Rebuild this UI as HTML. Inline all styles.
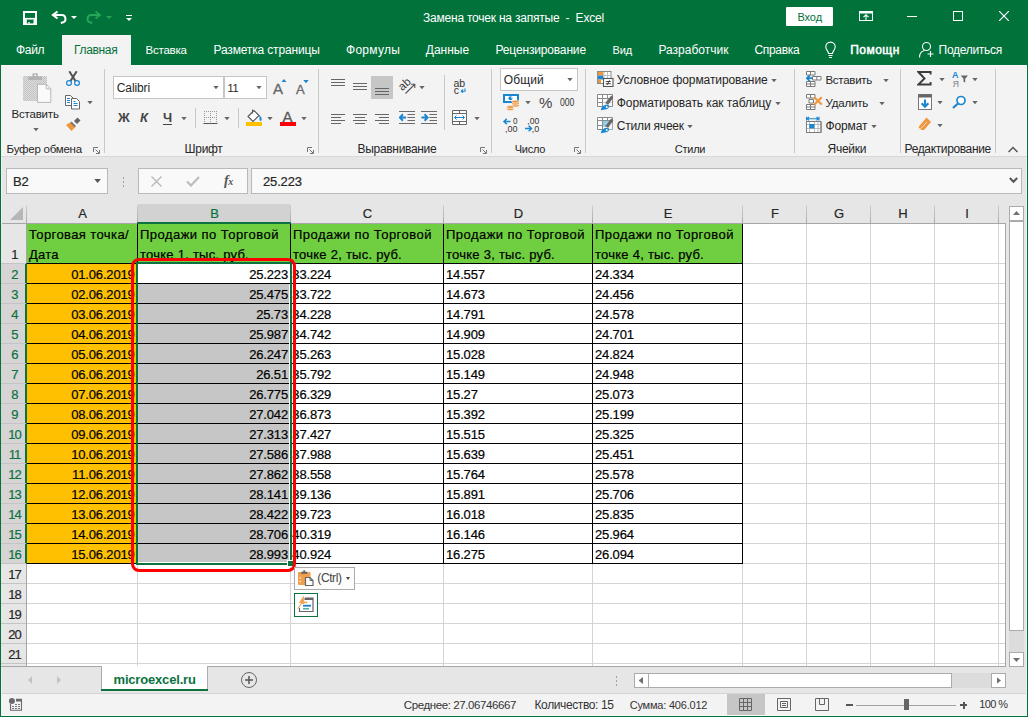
<!DOCTYPE html>
<html lang="ru"><head><meta charset="utf-8"><title>Замена точек на запятые - Excel</title>
<style>
*{box-sizing:border-box;margin:0;padding:0}
html,body{width:1028px;height:717px;overflow:hidden}
body{position:relative;background:#e6e6e6;font-family:"Liberation Sans",sans-serif;font-size:12px;color:#262626}
.abs,.t,.box,svg.i{position:absolute}
.t{white-space:nowrap;line-height:16px;height:16px}
.w{color:#fff}
.ui{font-size:12px;color:#262626}
.cell{position:absolute;white-space:nowrap;font-size:13px;line-height:20px;height:20px;color:#000;letter-spacing:-0.15px}
.tx{letter-spacing:0.38px}
.cell,.hd,.rn{-webkit-text-stroke:0.2px currentColor}
.hd{position:absolute;font-size:13px;line-height:19px;height:19px;color:#262626;text-align:center}
.rn{position:absolute;left:2px;width:25px;letter-spacing:-0.9px;font-size:13px;line-height:20px;height:20px;color:#262626;text-align:center}
.vsep{position:absolute;width:1px;background:#d4d4d4}
.arr{position:absolute;width:5.4px;height:3.2px;margin-left:0.3px;background:#555;clip-path:polygon(0 0,100% 0,50% 100%)}
</style></head><body>
<div class="box" style="left:0;top:0;width:1028px;height:65px;background:#02723b"></div>
<div class="box" style="left:0;top:65px;width:1px;height:652px;background:#02723b"></div>
<div class="box" style="left:1027px;top:65px;width:1px;height:652px;background:#02723b"></div>
<div class="box" style="left:0;top:716px;width:1028px;height:1px;background:#02723b"></div>
<div id="f1" class="t" style="left:423px;top:10px;font-size:12px;color:#fff;letter-spacing:-0.217px;white-space:pre;">Замена точек на запятые  -  Excel</div>
<svg class="i" style="left:23px;top:11px" width="14" height="14" viewBox="0 0 14 14"><rect x="1" y="1" width="12" height="12" fill="none" stroke="#fff" stroke-width="2"/><rect x="1" y="6.900" width="12" height="1.800" fill="#fff"/><rect x="0" y="8.500" width="14" height="5.500" fill="#fff"/><rect x="3.800" y="8.700" width="6.700" height="3.700" fill="#02723b"/><rect x="5.300" y="11" width="1.500" height="1.500" fill="#fff"/></svg>
<svg class="i" style="left:51px;top:10px" width="16" height="16" viewBox="0 0 16 16"><path d="M6.500 1.500L2 5L6.500 8.500" fill="none" stroke="#fff" stroke-width="2.200"/><path d="M2 5H10.500a3.800 3.800 0 0 1 1 7.500L9.800 13" fill="none" stroke="#fff" stroke-width="2"/></svg>
<div class="box" style="left:70.500px;top:16px;width:0;height:0;border-left:3px solid transparent;border-right:3px solid transparent;border-top:3px solid #fff"></div>
<svg class="i" style="left:86px;top:10px" width="16" height="16" viewBox="0 0 16 16"><path d="M9.500 1.500L14 5L9.500 8.500" fill="none" stroke="#22a352" stroke-width="1.900"/><path d="M14 5H5.500a3.800 3.800 0 0 0-1 7.500L6.200 13" fill="none" stroke="#25a858" stroke-width="1.900"/></svg>
<div class="box" style="left:105.500px;top:16px;width:0;height:0;border-left:3px solid transparent;border-right:3px solid transparent;border-top:3px solid #22a352"></div>
<div class="box" style="left:126px;top:15px;width:5.500px;height:1px;background:#fff"></div>
<div class="box" style="left:125.500px;top:18px;width:0;height:0;border-left:3px solid transparent;border-right:3px solid transparent;border-top:3.300px solid #fff"></div>
<div class="box" style="left:786px;top:7px;width:47px;height:19px;background:#fff;border-radius:1px"></div>
<div id="f2" class="t" style="left:797.5px;top:9px;font-size:11px;color:#02723b;letter-spacing:-0.112px;">Вход</div>
<svg class="i" style="left:859px;top:11px" width="14" height="10" viewBox="0 0 14 10"><rect x="0.5" y="0.5" width="13" height="9" fill="none" stroke="#fff"/><rect x="0" y="0" width="14" height="2.5" fill="#fff"/><path d="M7 4v5M4.5 6.2L7 3.8L9.5 6.2" fill="none" stroke="#fff" stroke-width="1.1"/></svg>
<div class="box" style="left:907px;top:16px;width:10px;height:1px;background:#fff"></div>
<div class="box" style="left:953px;top:11px;width:10px;height:10px;border:1px solid #fff"></div>
<svg class="i" style="left:999px;top:11px" width="10" height="10" viewBox="0 0 10 10"><path d="M0 0L10 10M10 0L0 10" stroke="#fff" stroke-width="1.2"/></svg>
<div class="box" style="left:62px;top:35px;width:69px;height:30px;background:#f3f3f3"></div>
<div id="f3" class="t" style="left:16px;top:42px;font-size:12px;color:#fff;letter-spacing:-0.319px;">Файл</div>
<div id="f4" class="t" style="left:74px;top:42px;font-size:12px;color:#02723b;letter-spacing:-0.337px;">Главная</div>
<div id="f5" class="t" style="left:145.5px;top:42px;font-size:11.5px;color:#fff;letter-spacing:-0.208px;">Вставка</div>
<div id="f6" class="t" style="left:213.5px;top:42px;font-size:12px;color:#fff;letter-spacing:-0.162px;">Разметка страницы</div>
<div id="f7" class="t" style="left:346px;top:42px;font-size:12px;color:#fff;letter-spacing:0.274px;">Формулы</div>
<div id="f8" class="t" style="left:425.8px;top:42px;font-size:12px;color:#fff;letter-spacing:-0.011px;">Данные</div>
<div id="f9" class="t" style="left:495.5px;top:42px;font-size:12px;color:#fff;letter-spacing:-0.161px;">Рецензирование</div>
<div id="f10" class="t" style="left:612.6px;top:42px;font-size:11px;color:#fff;letter-spacing:-0.203px;">Вид</div>
<div id="f11" class="t" style="left:658.4px;top:42px;font-size:12px;color:#fff;letter-spacing:0.001px;">Разработчик</div>
<div id="f12" class="t" style="left:754.4px;top:42px;font-size:12px;color:#fff;letter-spacing:-0.304px;">Справка</div>
<div id="f13" class="t" style="left:938.6px;top:42px;font-size:12px;color:#fff;letter-spacing:-0.302px;">Поделиться</div>
<div id="f14" class="t" style="left:850.2px;top:42px;font-size:12px;color:#fff;letter-spacing:0.485px;-webkit-text-stroke:0.5px #fff;">Помощн</div>
<svg class="i" style="left:824px;top:41px" width="13" height="18" viewBox="0 0 13 18"><path d="M4.5 12.5C4.5 10 1.8 9 1.8 5.8a4.7 4.7 0 0 1 9.4 0C11.2 9 8.5 10 8.5 12.5z" fill="none" stroke="#fff" stroke-width="1.1"/><path d="M4.5 14.5h4M5 16.5h3" stroke="#fff" stroke-width="1"/></svg>
<svg class="i" style="left:918px;top:41px" width="17" height="18" viewBox="0 0 17 18"><circle cx="8.5" cy="5.5" r="4" fill="none" stroke="#fff" stroke-width="1.1"/><path d="M1.5 16.5c0-4 2.5-6.5 5-7" fill="none" stroke="#fff" stroke-width="1.1"/><path d="M12.5 10v6M9.5 13h6" stroke="#fff" stroke-width="1.1"/></svg>
<div class="box" style="left:1px;top:65px;width:1026px;height:91px;background:#f3f3f3"></div>
<div class="box" style="left:1px;top:156px;width:1026px;height:1px;background:#d8d8d8"></div>
<div class="box" style="left:1px;top:65px;width:61px;height:1px;background:#fbf8fa"></div>
<div class="box" style="left:131px;top:65px;width:896px;height:1px;background:#fbf8fa"></div>
<div class="box" style="left:1026px;top:65px;width:1px;height:91px;background:#fbf8fa"></div>
<div class="box" style="left:104px;top:69px;width:1px;height:84px;background:#c8c8c8"></div>
<div class="box" style="left:318px;top:69px;width:1px;height:84px;background:#c8c8c8"></div>
<div class="box" style="left:491px;top:69px;width:1px;height:84px;background:#c8c8c8"></div>
<div class="box" style="left:585px;top:69px;width:1px;height:84px;background:#c8c8c8"></div>
<div class="box" style="left:794px;top:69px;width:1px;height:84px;background:#c8c8c8"></div>
<div class="box" style="left:900px;top:69px;width:1px;height:84px;background:#c8c8c8"></div>
<div class="box" style="left:995px;top:69px;width:1px;height:84px;background:#c8c8c8"></div>
<div class="box" style="left:195px;top:108px;width:1px;height:20px;background:#c8c8c8"></div>
<div class="box" style="left:238px;top:108px;width:1px;height:20px;background:#c8c8c8"></div>
<div class="box" style="left:444px;top:75px;width:1px;height:55px;background:#c8c8c8"></div>
<div class="box" style="left:23px;top:76px;width:24px;height:25px;border-radius:1px;background:repeating-conic-gradient(#c4c4c4 0% 25%,#dcdcdc 0% 50%) 0 0/2px 2px"></div>
<svg class="i" style="left:22px;top:72px" width="30" height="32" viewBox="0 0 30 32"><rect x="6.300" y="4.500" width="13.700" height="3.500" fill="#b2b2b2"/><rect x="10.500" y="1.200" width="5.300" height="4" rx="1" fill="#b2b2b2"/><circle cx="13.200" cy="3.200" r="1" fill="#f3f3f3"/><path d="M15.500 12.300h8.700l4.600 4.600v13.500h-13.300z" fill="#fafafa" stroke="#b8b8b8"/><path d="M24.200 12.300v4.600h4.600" fill="none" stroke="#b8b8b8"/></svg>
<div id="f15" class="t" style="left:11.6px;top:106px;font-size:11.5px;color:#262626;letter-spacing:-0.207px;">Вставить</div>
<div class="arr" style="left:33px;top:128px;background:#666"></div>
<svg class="i" style="left:65px;top:71px" width="16" height="16" viewBox="0 0 16 16"><path d="M4.300 0.300L10.800 10.500M11.700 0.300L5.200 10.500" stroke="#505050" stroke-width="2" fill="none"/><circle cx="4" cy="12" r="2.400" fill="#f3f3f3" stroke="#1a86d0" stroke-width="1.200"/><circle cx="12" cy="12" r="2.400" fill="#f3f3f3" stroke="#1a86d0" stroke-width="1.200"/></svg>
<svg class="i" style="left:64px;top:95px" width="17" height="15" viewBox="0 0 17 15"><path d="M1.500 0.500h5l2.500 2.500v7.500h-7.500z" fill="#fff" stroke="#666"/><path d="M7.500 3.500h5l3 3v7.500h-8z" fill="#fff" stroke="#666"/><path d="M3 3.500h3M3 5.500h3M3 7.500h3M9.500 8.500h4M9.500 10.500h4" stroke="#1a86d0"/><path d="M9.500 6.500h2" stroke="#1a86d0"/></svg>
<div class="arr" style="left:87px;top:101px;background:#666"></div>
<svg class="i" style="left:65px;top:116px" width="17" height="16" viewBox="0 0 17 16"><path d="M9 5L12.500 1.500L15.500 4.500L12 8z" fill="#666"/><path d="M6.500 5.500L11 10L9 12L4.500 7.500z" fill="#777"/><path d="M1 9L5 6.500L10 11.500L6.500 15z" fill="#f0963c"/></svg>
<div id="f16" class="t" style="left:6.6px;top:141px;font-size:11.5px;color:#262626;letter-spacing:-0.24px;">Буфер обмена</div>
<svg class="i" style="left:93px;top:147px" width="7" height="7" viewBox="0 0 7 7"><path d="M0.5 5V0.5H5" fill="none" stroke="#777" stroke-width="1"/><path d="M2.5 2.5L6 6M6.5 3v3.5H3" fill="none" stroke="#777" stroke-width="1"/></svg>
<div class="box" style="left:113px;top:76px;width:111px;height:23px;background:#fff;border:1px solid #c6c6c6"></div>
<div class="box" style="left:224px;top:76px;width:43px;height:23px;background:#fff;border:1px solid #c6c6c6"></div>
<div id="f17" class="t" style="left:116.8px;top:80px;font-size:12px;color:#262626;letter-spacing:-0.125px;">Calibri</div>
<div id="f18" class="t" style="left:227.4px;top:80px;font-size:11px;color:#262626;letter-spacing:-0.215px;">11</div>
<div class="arr" style="left:213px;top:86px;background:#666"></div>
<div class="arr" style="left:256px;top:86px;background:#666"></div>
<div class="t" style="left:273px;top:81px;font-size:15px;color:#666;-webkit-text-stroke:0.300px #666">A</div>
<div class="arr" style="left:281px;top:79px;background:#1a86d0;clip-path:polygon(0 100%,100% 100%,50% 0)"></div>
<div class="t" style="left:296px;top:82px;font-size:13px;color:#666;-webkit-text-stroke:0.300px #666">A</div>
<div class="arr" style="left:303px;top:80px;background:#1a86d0"></div>
<div class="t" style="left:118px;top:110px;font-size:13px;font-weight:bold;color:#444">Ж</div>
<div class="t" style="left:140px;top:110px;font-size:13px;font-weight:bold;font-style:italic;color:#444">К</div>
<div class="t" style="left:163px;top:110px;font-size:13px;font-weight:bold;color:#444;border-bottom:1px solid #444;height:15px;line-height:15px">Ч</div>
<div class="arr" style="left:181px;top:117px;background:#666"></div>
<svg class="i" style="left:203px;top:110px" width="15" height="15" viewBox="0 0 15 15"><path d="M1 1.500h13M1 7.500h13M1.500 1v12M7.500 1v12M13.500 1v12" stroke="#999" stroke-dasharray="1 1" fill="none"/><path d="M0.500 13.500h14" stroke="#555"/></svg>
<div class="arr" style="left:224px;top:117px;background:#666"></div>
<svg class="i" style="left:245px;top:109px" width="18" height="17" viewBox="0 0 18 17"><path d="M3 7.500L9 1.500L14 6.500L8 12.500z" fill="#fff" stroke="#555" stroke-width="1.100"/><path d="M7.500 0.500v4" stroke="#555"/><path d="M13.500 5.500c2.500 1.500 3.800 3.800 3 6c-1 1-2.300 0-2-1.500c0.300-1.500 0-3-1-4.500z" fill="#1a86d0"/><rect x="1" y="13" width="16" height="4" fill="#ffc000"/></svg>
<div class="arr" style="left:267px;top:117px;background:#666"></div>
<div class="t" style="left:282.500px;top:108.500px;font-size:15px;color:#5a5a5a;-webkit-text-stroke:0.300px #5a5a5a">A</div>
<div class="box" style="left:280px;top:122px;width:16px;height:4px;background:#fb0007"></div>
<div class="arr" style="left:301px;top:117px;background:#666"></div>
<div id="f19" class="t" style="left:184.6px;top:141px;font-size:12px;color:#262626;letter-spacing:-0.308px;">Шрифт</div>
<svg class="i" style="left:307px;top:147px" width="7" height="7" viewBox="0 0 7 7"><path d="M0.5 5V0.5H5" fill="none" stroke="#777" stroke-width="1"/><path d="M2.5 2.5L6 6M6.5 3v3.5H3" fill="none" stroke="#777" stroke-width="1"/></svg>
<div class="box" style="left:331px;top:79px;width:14px;height:1px;background:#666"></div>
<div class="box" style="left:331px;top:82px;width:14px;height:1px;background:#666"></div>
<div class="box" style="left:331px;top:85px;width:14px;height:1px;background:#666"></div>
<div class="box" style="left:353px;top:83px;width:14px;height:1px;background:#666"></div>
<div class="box" style="left:353px;top:86px;width:14px;height:1px;background:#666"></div>
<div class="box" style="left:353px;top:89px;width:14px;height:1px;background:#666"></div>
<div class="box" style="left:371px;top:76px;width:22px;height:23px;background:#c6c6c6"></div>
<div class="box" style="left:375px;top:88px;width:14px;height:1px;background:#666"></div>
<div class="box" style="left:375px;top:91px;width:14px;height:1px;background:#666"></div>
<div class="box" style="left:375px;top:94px;width:14px;height:1px;background:#666"></div>
<svg class="i" style="left:398px;top:78px" width="19" height="18" viewBox="0 0 19 18"><text x="0" y="0" transform="translate(4.300,13.300) rotate(-42)" font-family="Liberation Sans, sans-serif" font-size="11.500" fill="#3a3a3a">ab</text><path d="M7.500 15.500L16.500 6.500M13 6.200h3.800v3.800" fill="none" stroke="#555" stroke-width="1.100"/></svg>
<div class="arr" style="left:419px;top:86px;background:#666"></div>
<svg class="i" style="left:453px;top:78px" width="15" height="17" viewBox="0 0 15 17"><text x="0.500" y="8.500" font-family="Liberation Sans, sans-serif" font-size="10.500" fill="#333">ab</text><text x="0.800" y="15.500" font-family="Liberation Sans, sans-serif" font-size="10.500" fill="#333">c</text><path d="M12 10.500v2.700h-3.500M10 11.500l-1.700 1.700l1.700 1.700" fill="none" stroke="#1a86d0" stroke-width="1.100"/></svg>
<svg class="i" style="left:452px;top:110px" width="15" height="15" viewBox="0 0 15 15"><path d="M0.500 0.500h14v14h-14zM0.500 3.500h14M0.500 11.500h14M7.500 0.500v3M7.500 11.500v3" fill="#fff" stroke="#666"/><path d="M2.500 7.500h10M4.500 5.500l-2 2l2 2M10.500 5.500l2 2l-2 2" fill="none" stroke="#1a86d0" stroke-width="1"/></svg>
<div class="arr" style="left:474px;top:117px;background:#666"></div>
<div class="box" style="left:331px;top:114px;width:14px;height:1px;background:#666"></div>
<div class="box" style="left:331px;top:117px;width:10px;height:1px;background:#666"></div>
<div class="box" style="left:331px;top:120px;width:14px;height:1px;background:#666"></div>
<div class="box" style="left:331px;top:123px;width:10px;height:1px;background:#666"></div>
<div class="box" style="left:353px;top:114px;width:14px;height:1px;background:#666"></div>
<div class="box" style="left:355px;top:117px;width:10px;height:1px;background:#666"></div>
<div class="box" style="left:353px;top:120px;width:14px;height:1px;background:#666"></div>
<div class="box" style="left:355px;top:123px;width:10px;height:1px;background:#666"></div>
<div class="box" style="left:375px;top:114px;width:14px;height:1px;background:#666"></div>
<div class="box" style="left:379px;top:117px;width:10px;height:1px;background:#666"></div>
<div class="box" style="left:375px;top:120px;width:14px;height:1px;background:#666"></div>
<div class="box" style="left:379px;top:123px;width:10px;height:1px;background:#666"></div>
<svg class="i" style="left:399px;top:110px" width="16" height="15" viewBox="0 0 17 15" preserveAspectRatio="none"><path d="M0 1.500h17M9 4.500h8M9 7.500h8M9 10.500h8M0 13.500h17" stroke="#666"/><path d="M7.500 7.500h-6M4.200 4.300l-3.200 3.200l3.200 3.200" fill="none" stroke="#1a86d0" stroke-width="2"/></svg>
<svg class="i" style="left:421px;top:110px" width="16" height="15" viewBox="0 0 17 15" preserveAspectRatio="none"><path d="M0 1.500h17M9 4.500h8M9 7.500h8M9 10.500h8M0 13.500h17" stroke="#666"/><path d="M0.500 7.500h6M3.800 4.300l3.200 3.200l-3.200 3.200" fill="none" stroke="#1a86d0" stroke-width="2"/></svg>
<div id="f20" class="t" style="left:357.6px;top:141px;font-size:12px;color:#262626;letter-spacing:-0.323px;">Выравнивание</div>
<svg class="i" style="left:480px;top:147px" width="7" height="7" viewBox="0 0 7 7"><path d="M0.5 5V0.5H5" fill="none" stroke="#777" stroke-width="1"/><path d="M2.5 2.5L6 6M6.5 3v3.5H3" fill="none" stroke="#777" stroke-width="1"/></svg>
<div class="box" style="left:500px;top:68px;width:78px;height:23px;background:#fff;border:1px solid #c6c6c6"></div>
<div id="f21" class="t" style="left:503.7px;top:72px;font-size:12px;color:#262626;letter-spacing:0.133px;">Общий</div>
<div class="arr" style="left:567px;top:78px;background:#666"></div>
<svg class="i" style="left:502px;top:93px" width="18" height="18" viewBox="0 0 18 18"><rect x="2" y="2" width="14" height="7" fill="#fff" stroke="#1a86d0" stroke-width="2"/><circle cx="8.500" cy="5.300" r="2" fill="#1a86d0"/><path d="M8.800 4.200a1.400 1.400 0 0 1 1.300 1.600" stroke="#fff" stroke-width="0.800" fill="none"/><g fill="#f0963c" stroke="#f3f3f3" stroke-width="0.700"><ellipse cx="13.500" cy="12.600" rx="3.600" ry="1.500"/><ellipse cx="13.500" cy="10.600" rx="3.600" ry="1.500"/><ellipse cx="13.500" cy="8.600" rx="3.600" ry="1.500"/><ellipse cx="8.300" cy="16" rx="3.600" ry="1.500"/><ellipse cx="8.300" cy="14" rx="3.600" ry="1.500"/></g></svg>
<div class="arr" style="left:525px;top:101px;background:#666"></div>
<div class="t" style="left:539px;top:95px;font-size:15px;color:#444">%</div>
<div class="t" style="left:560px;top:93.500px;font-size:11px;color:#333;transform:scaleX(0.780);transform-origin:left center">000</div>
<svg class="i" style="left:502px;top:116px" width="17" height="18" viewBox="0 0 17 18"><text x="11" y="8" font-family="Liberation Sans, sans-serif" font-size="9" fill="#333" textLength="4.500" lengthAdjust="spacingAndGlyphs">0</text><text x="3" y="16" font-family="Liberation Sans, sans-serif" font-size="9" fill="#333" textLength="12.500" lengthAdjust="spacingAndGlyphs">,00</text><path d="M8.500 5.500H2M4.800 2.700L2 5.500l2.800 2.800" fill="none" stroke="#1a86d0" stroke-width="1.500"/></svg>
<svg class="i" style="left:524px;top:116px" width="17" height="18" viewBox="0 0 17 18"><text x="3.300" y="8" font-family="Liberation Sans, sans-serif" font-size="9" fill="#333" textLength="12" lengthAdjust="spacingAndGlyphs">,00</text><text x="7.800" y="16" font-family="Liberation Sans, sans-serif" font-size="9" fill="#333" textLength="7.500" lengthAdjust="spacingAndGlyphs">,0</text><path d="M1 12.500h6.500M4.700 9.700l2.800 2.800l-2.800 2.800" fill="none" stroke="#1a86d0" stroke-width="1.500"/></svg>
<div id="f22" class="t" style="left:514.7px;top:141px;font-size:11px;color:#262626;letter-spacing:-0.253px;">Число</div>
<svg class="i" style="left:574px;top:147px" width="7" height="7" viewBox="0 0 7 7"><path d="M0.5 5V0.5H5" fill="none" stroke="#777" stroke-width="1"/><path d="M2.5 2.5L6 6M6.5 3v3.5H3" fill="none" stroke="#777" stroke-width="1"/></svg>
<svg class="i" style="left:597px;top:71px" width="17" height="16" viewBox="0 0 17 16"><rect x="0.500" y="0.500" width="13.500" height="12" fill="#fff" stroke="#8a8a8a"/><rect x="1" y="1" width="5.500" height="3.500" fill="#f0963c"/><rect x="1" y="4.500" width="5.500" height="4" fill="#1a86d0"/><rect x="1" y="8.500" width="3" height="3.500" fill="#f0963c"/><path d="M7 1v6M10.500 1v6M7 4.500h7" stroke="#c0c0c0" fill="none"/><rect x="6.500" y="7.500" width="9.500" height="8" fill="#fff" stroke="#555" stroke-width="1.100"/><path d="M8.800 10.500h5M8.800 12.700h5M12.600 9.300l-2.600 4.600" stroke="#333" stroke-width="0.900" fill="none"/></svg>
<svg class="i" style="left:597px;top:94px" width="17" height="17" viewBox="0 0 17 17"><path d="M0.500 0.500h15v12h-15zM0.500 4.500h15M0.500 8.500h15M5.500 0.500v12M10.500 0.500v12" fill="#fff" stroke="#8a8a8a"/><rect x="6" y="5" width="9" height="7" fill="#f3f3f3" opacity="0.700"/><path d="M16.300 3.500L11.200 10.800l-3-1.800L14.300 1.500z" fill="#666"/><path d="M3.800 16.300c0.600-4.100 4.300-6.600 7.600-5.200c1.600 1.600 0.300 3.700-2.200 4.100c-1.800 0.300-3.600 0.500-5.400 1.100z" fill="#1a86d0"/><circle cx="9.700" cy="12.900" r="1" fill="#fff"/></svg>
<svg class="i" style="left:597px;top:117px" width="17" height="17" viewBox="0 0 17 17"><path d="M0.500 0.500h15v12h-15zM0.500 3.500h15M0.500 8.500h5M5.500 0.500v12M10.500 0.500v3" fill="#fff" stroke="#8a8a8a"/><rect x="6" y="4" width="6" height="6" fill="#8fd0ee"/><rect x="9" y="6" width="6.500" height="6.500" fill="#f3f3f3" opacity="0.600"/><path d="M16.300 3.500L11.200 10.800l-3-1.800L14.300 1.500z" fill="#666"/><path d="M3.800 16.300c0.600-4.100 4.300-6.600 7.600-5.200c1.600 1.600 0.300 3.700-2.200 4.100c-1.800 0.300-3.600 0.500-5.400 1.100z" fill="#1a86d0"/><circle cx="9.700" cy="12.900" r="1" fill="#fff"/></svg>
<div id="f23" class="t" style="left:616.8px;top:72px;font-size:12px;color:#262626;letter-spacing:-0.079px;">Условное форматирование</div>
<div class="arr" style="left:771px;top:79px;background:#666"></div>
<div id="f24" class="t" style="left:616.8px;top:95px;font-size:12px;color:#262626;letter-spacing:-0.067px;">Форматировать как таблицу</div>
<div class="arr" style="left:775px;top:102px;background:#666"></div>
<div id="f25" class="t" style="left:616.8px;top:118px;font-size:12px;color:#262626;letter-spacing:-0.197px;">Стили ячеек</div>
<div class="arr" style="left:687px;top:125px;background:#666"></div>
<div id="f26" class="t" style="left:674.8px;top:141px;font-size:11px;color:#262626;letter-spacing:-0.245px;">Стили</div>
<svg class="i" style="left:806px;top:71px" width="16" height="16" viewBox="0 0 16 16"><path d="M0.500 0.500h8.500v3.500h-8.500zM4.500 0.500v3.500M6.500 5.500h8.500v3.500h-8.500zM10.800 5.500v3.500M0.500 10.500h8.500v5h-8.500zM4.500 10.500v5M0.500 13h8.500" fill="#fff" stroke="#7a7a7a"/><path d="M6.500 7.200H1.200M3.800 4.300L0.900 7.200l2.900 2.900" fill="none" stroke="#1a86d0" stroke-width="1.800"/></svg>
<svg class="i" style="left:806px;top:94px" width="17" height="16" viewBox="0 0 17 16"><path d="M0.500 0.500h8.500v3.500h-8.500zM4.500 0.500v3.500M3 5.500h4.500v3.500h-4.500zM0.500 10.500h8.500v5h-8.500zM4.500 10.500v5M0.500 13h8.500" fill="#fff" stroke="#7a7a7a"/><path d="M8.300 3.200l7.400 7.400M15.700 3.200l-7.400 7.400" stroke="#f0963c" stroke-width="2.100"/></svg>
<svg class="i" style="left:806px;top:116px" width="16" height="17" viewBox="0 0 16 17"><path d="M0.500 2.700h12.500M0.500 0.800v3.800M13 0.800v3.800M3 1l-2 1.700l2 1.700M10.500 1l2 1.700l-2 1.700" fill="none" stroke="#1a86d0" stroke-width="1.100"/><path d="M0.500 5.500h14.500v11h-14.500z" fill="#fff" stroke="#7a7a7a"/><path d="M0.500 8.500h14.500M0.500 12.500h14.500M3.500 5.500v11M8.500 5.500v11M12 5.500v11" fill="none" stroke="#bdbdbd"/><path d="M0.500 5.500h14.500v11h-14.500z" fill="none" stroke="#7a7a7a"/><rect x="3.300" y="8" width="5" height="4.500" fill="#1a86d0"/></svg>
<div id="f27" class="t" style="left:825.4px;top:72px;font-size:11.5px;color:#262626;letter-spacing:-0.26px;">Вставить</div>
<div class="arr" style="left:883px;top:79px;background:#666"></div>
<div id="f28" class="t" style="left:825.4px;top:95px;font-size:11.5px;color:#262626;letter-spacing:-0.155px;">Удалить</div>
<div class="arr" style="left:879px;top:102px;background:#666"></div>
<div id="f29" class="t" style="left:825.4px;top:118px;font-size:12px;color:#262626;letter-spacing:-0.08px;">Формат</div>
<div class="arr" style="left:871px;top:125px;background:#666"></div>
<div id="f30" class="t" style="left:827.5px;top:141px;font-size:12px;color:#262626;letter-spacing:-0.245px;">Ячейки</div>
<svg class="i" style="left:917px;top:71px" width="15" height="15" viewBox="0 0 16 15" preserveAspectRatio="none"><path d="M14.500 3.500V1H1.500L8 7.500L1.500 13.500H14.500V11" fill="none" stroke="#3c3c3c" stroke-width="2"/></svg>
<div class="arr" style="left:939px;top:78px;background:#666"></div>
<svg class="i" style="left:952px;top:70px" width="17" height="18" viewBox="0 0 17 18"><text x="0" y="8" font-family="Liberation Sans, sans-serif" font-size="9" font-weight="bold" fill="#1a86d0">А</text><text x="0.500" y="17" font-family="Liberation Sans, sans-serif" font-size="9" fill="#808080">Я</text><path d="M8.700 5.500h7.300l-2.800 3.300v3.700l-1.700-0.800V8.800z" fill="#666"/></svg>
<div class="arr" style="left:972px;top:78px;background:#666"></div>
<svg class="i" style="left:918px;top:94px" width="14" height="16" viewBox="0 0 14 16"><rect x="0.500" y="0.500" width="13" height="15" fill="#fff" stroke="#777"/><rect x="0.500" y="0.500" width="13" height="3" fill="#666"/><path d="M7 5.500v7M3.600 9.300l3.400 3.500l3.400-3.500" fill="none" stroke="#1a86d0" stroke-width="2.100"/></svg>
<div class="arr" style="left:937px;top:101px;background:#666"></div>
<svg class="i" style="left:952px;top:95px" width="15" height="14" viewBox="0 0 15 14"><circle cx="9" cy="5.500" r="4" fill="#fff" stroke="#1a86d0" stroke-width="1.700"/><path d="M6 8.500L1 13" stroke="#1a86d0" stroke-width="2.200"/></svg>
<div class="arr" style="left:972px;top:101px;background:#666"></div>
<svg class="i" style="left:918px;top:117px" width="14" height="15" viewBox="0 0 14 15"><path d="M8.500 0.500L13 5L6 13H3L0.500 10z" fill="#f0963c"/><path d="M2 12.500L9 5" stroke="#f3f3f3" stroke-width="0.800"/></svg>
<div class="arr" style="left:937px;top:124px;background:#666"></div>
<div id="f31" class="t" style="left:904.6px;top:141px;font-size:12px;color:#262626;letter-spacing:-0.372px;">Редактирование</div>
<svg class="i" style="left:1008px;top:146px" width="10" height="7" viewBox="0 0 10 7"><path d="M0.500 6L5 1.500L9.500 6" fill="none" stroke="#555" stroke-width="1.500"/></svg>
<div class="box" style="left:6px;top:168px;width:102px;height:26px;background:#f9f9f9;border:1px solid #b9b9b9"></div>
<div class="cell" style="left:13px;top:172px;color:#262626">B2</div>
<div class="box" style="left:94.300px;top:179px;width:6.600px;height:4px;background:#555;clip-path:polygon(0 0,100% 0,50% 100%)"></div>
<div class="box" style="left:122.500px;top:177px;width:1.600px;height:1.800px;background:#a0a0a0"></div>
<div class="box" style="left:122.500px;top:181px;width:1.600px;height:1.800px;background:#a0a0a0"></div>
<div class="box" style="left:122.500px;top:185px;width:1.600px;height:1.800px;background:#a0a0a0"></div>
<div class="box" style="left:138px;top:168px;width:110px;height:26px;background:#f9f9f9;border:1px solid #b9b9b9"></div>
<svg class="i" style="left:151px;top:176px" width="11" height="11" viewBox="0 0 11 11"><path d="M0.500 0.500L10.500 10.500M10.500 0.500L0.500 10.500" stroke="#b8b8b8" stroke-width="1.400"/></svg>
<svg class="i" style="left:186px;top:176px" width="14" height="11" viewBox="0 0 14 11"><path d="M1 5.500L5 9.500L13 1" fill="none" stroke="#bdbdbd" stroke-width="2.200"/></svg>
<div class="t" style="left:224px;top:173px;font-family:'Liberation Serif',serif;font-style:italic;font-size:14px;color:#555;font-weight:bold;letter-spacing:-0.5px">f<span style="font-size:10px">x</span></div>
<div class="box" style="left:251px;top:168px;width:771px;height:26px;background:#f9f9f9;border:1px solid #b9b9b9"></div>
<div class="cell" style="left:263px;top:172px;color:#262626">25.223</div>
<svg class="i" style="left:1009px;top:177px" width="9" height="7" viewBox="0 0 9 7"><path d="M0.800 1L4.500 4.800L8.200 1" fill="none" stroke="#555" stroke-width="2"/></svg>
<div class="box" style="left:1px;top:224px;width:1005px;height:443px;background:#fff"></div>
<div class="box" style="left:138px;top:204px;width:152px;height:19px;background:#d2d2d2"></div>
<div class="box" style="left:1px;top:223px;width:1005px;height:1px;background:#a6a6a6"></div>
<div class="box" style="left:137px;top:205px;width:1px;height:18px;background:linear-gradient(#d0d0d0,#a8a8a8)"></div>
<div class="hd" style="left:27px;top:204px;width:111px;">A</div>
<div class="box" style="left:290px;top:205px;width:1px;height:18px;background:linear-gradient(#d0d0d0,#a8a8a8)"></div>
<div class="hd" style="left:138px;top:204px;width:153px;color:#0b7240;">B</div>
<div class="box" style="left:443px;top:205px;width:1px;height:18px;background:linear-gradient(#d0d0d0,#a8a8a8)"></div>
<div class="hd" style="left:291px;top:204px;width:153px;">C</div>
<div class="box" style="left:592px;top:205px;width:1px;height:18px;background:linear-gradient(#d0d0d0,#a8a8a8)"></div>
<div class="hd" style="left:444px;top:204px;width:149px;">D</div>
<div class="box" style="left:742px;top:205px;width:1px;height:18px;background:linear-gradient(#d0d0d0,#a8a8a8)"></div>
<div class="hd" style="left:593px;top:204px;width:150px;">E</div>
<div class="box" style="left:806px;top:205px;width:1px;height:18px;background:linear-gradient(#d0d0d0,#a8a8a8)"></div>
<div class="hd" style="left:743px;top:204px;width:64px;">F</div>
<div class="box" style="left:870px;top:205px;width:1px;height:18px;background:linear-gradient(#d0d0d0,#a8a8a8)"></div>
<div class="hd" style="left:807px;top:204px;width:64px;">G</div>
<div class="box" style="left:934px;top:205px;width:1px;height:18px;background:linear-gradient(#d0d0d0,#a8a8a8)"></div>
<div class="hd" style="left:871px;top:204px;width:64px;">H</div>
<div class="box" style="left:998px;top:205px;width:1px;height:18px;background:linear-gradient(#d0d0d0,#a8a8a8)"></div>
<div class="hd" style="left:935px;top:204px;width:64px;">I</div>
<div class="box" style="left:26px;top:205px;width:1px;height:18px;background:linear-gradient(#d0d0d0,#a8a8a8)"></div>
<svg class="i" style="left:10px;top:207px" width="13" height="13" viewBox="0 0 13 13"><path d="M13 0V13H0z" fill="#b7b7b7"/></svg>
<div class="box" style="left:137px;top:222px;width:154px;height:2px;background:#0b7240"></div>
<div class="box" style="left:1px;top:224px;width:25px;height:442px;background:#e6e6e6"></div>
<div class="box" style="left:26px;top:224px;width:1px;height:442px;background:#a6a6a6"></div>
<div class="box" style="left:1px;top:264px;width:25px;height:299px;background:#d6d4d4"></div>
<div class="box" style="left:25px;top:263px;width:2px;height:301px;background:#0b7240"></div>
<div class="box" style="left:137px;top:224px;width:1px;height:442px;background:#d4d4d4"></div>
<div class="box" style="left:290px;top:224px;width:1px;height:442px;background:#d4d4d4"></div>
<div class="box" style="left:443px;top:224px;width:1px;height:442px;background:#d4d4d4"></div>
<div class="box" style="left:592px;top:224px;width:1px;height:442px;background:#d4d4d4"></div>
<div class="box" style="left:742px;top:224px;width:1px;height:442px;background:#d4d4d4"></div>
<div class="box" style="left:806px;top:224px;width:1px;height:442px;background:#d4d4d4"></div>
<div class="box" style="left:870px;top:224px;width:1px;height:442px;background:#d4d4d4"></div>
<div class="box" style="left:934px;top:224px;width:1px;height:442px;background:#d4d4d4"></div>
<div class="box" style="left:998px;top:224px;width:1px;height:442px;background:#d4d4d4"></div>
<div class="box" style="left:27px;top:263px;width:979px;height:1px;background:#d4d4d4"></div>
<div class="box" style="left:1px;top:263px;width:25px;height:1px;background:#c4c4c4"></div>
<div class="box" style="left:27px;top:283px;width:979px;height:1px;background:#d4d4d4"></div>
<div class="box" style="left:1px;top:283px;width:25px;height:1px;background:#c4c4c4"></div>
<div class="box" style="left:27px;top:303px;width:979px;height:1px;background:#d4d4d4"></div>
<div class="box" style="left:1px;top:303px;width:25px;height:1px;background:#c4c4c4"></div>
<div class="box" style="left:27px;top:323px;width:979px;height:1px;background:#d4d4d4"></div>
<div class="box" style="left:1px;top:323px;width:25px;height:1px;background:#c4c4c4"></div>
<div class="box" style="left:27px;top:343px;width:979px;height:1px;background:#d4d4d4"></div>
<div class="box" style="left:1px;top:343px;width:25px;height:1px;background:#c4c4c4"></div>
<div class="box" style="left:27px;top:363px;width:979px;height:1px;background:#d4d4d4"></div>
<div class="box" style="left:1px;top:363px;width:25px;height:1px;background:#c4c4c4"></div>
<div class="box" style="left:27px;top:383px;width:979px;height:1px;background:#d4d4d4"></div>
<div class="box" style="left:1px;top:383px;width:25px;height:1px;background:#c4c4c4"></div>
<div class="box" style="left:27px;top:403px;width:979px;height:1px;background:#d4d4d4"></div>
<div class="box" style="left:1px;top:403px;width:25px;height:1px;background:#c4c4c4"></div>
<div class="box" style="left:27px;top:423px;width:979px;height:1px;background:#d4d4d4"></div>
<div class="box" style="left:1px;top:423px;width:25px;height:1px;background:#c4c4c4"></div>
<div class="box" style="left:27px;top:443px;width:979px;height:1px;background:#d4d4d4"></div>
<div class="box" style="left:1px;top:443px;width:25px;height:1px;background:#c4c4c4"></div>
<div class="box" style="left:27px;top:463px;width:979px;height:1px;background:#d4d4d4"></div>
<div class="box" style="left:1px;top:463px;width:25px;height:1px;background:#c4c4c4"></div>
<div class="box" style="left:27px;top:483px;width:979px;height:1px;background:#d4d4d4"></div>
<div class="box" style="left:1px;top:483px;width:25px;height:1px;background:#c4c4c4"></div>
<div class="box" style="left:27px;top:503px;width:979px;height:1px;background:#d4d4d4"></div>
<div class="box" style="left:1px;top:503px;width:25px;height:1px;background:#c4c4c4"></div>
<div class="box" style="left:27px;top:523px;width:979px;height:1px;background:#d4d4d4"></div>
<div class="box" style="left:1px;top:523px;width:25px;height:1px;background:#c4c4c4"></div>
<div class="box" style="left:27px;top:543px;width:979px;height:1px;background:#d4d4d4"></div>
<div class="box" style="left:1px;top:543px;width:25px;height:1px;background:#c4c4c4"></div>
<div class="box" style="left:27px;top:563px;width:979px;height:1px;background:#d4d4d4"></div>
<div class="box" style="left:1px;top:563px;width:25px;height:1px;background:#c4c4c4"></div>
<div class="box" style="left:27px;top:583px;width:979px;height:1px;background:#d4d4d4"></div>
<div class="box" style="left:1px;top:583px;width:25px;height:1px;background:#c4c4c4"></div>
<div class="box" style="left:27px;top:603px;width:979px;height:1px;background:#d4d4d4"></div>
<div class="box" style="left:1px;top:603px;width:25px;height:1px;background:#c4c4c4"></div>
<div class="box" style="left:27px;top:623px;width:979px;height:1px;background:#d4d4d4"></div>
<div class="box" style="left:1px;top:623px;width:25px;height:1px;background:#c4c4c4"></div>
<div class="box" style="left:27px;top:643px;width:979px;height:1px;background:#d4d4d4"></div>
<div class="box" style="left:1px;top:643px;width:25px;height:1px;background:#c4c4c4"></div>
<div class="box" style="left:27px;top:663px;width:979px;height:1px;background:#d4d4d4"></div>
<div class="box" style="left:1px;top:663px;width:25px;height:1px;background:#c4c4c4"></div>
<div class="box" style="left:1005px;top:223px;width:1px;height:444px;background:#a6a6a6"></div>
<div class="box" style="left:1px;top:666px;width:1005px;height:1px;background:#a6a6a6"></div>
<div class="box" style="left:27px;top:224px;width:715px;height:39px;background:#6fcf40"></div>
<div class="box" style="left:27px;top:264px;width:110px;height:299px;background:#ffc000"></div>
<div class="box" style="left:138px;top:284px;width:151px;height:278px;background:#c6c6c6"></div>
<div class="box" style="left:137px;top:224px;width:1px;height:340px;background:#000"></div>
<div class="box" style="left:290px;top:224px;width:1px;height:340px;background:#000"></div>
<div class="box" style="left:443px;top:224px;width:1px;height:340px;background:#000"></div>
<div class="box" style="left:592px;top:224px;width:1px;height:340px;background:#000"></div>
<div class="box" style="left:742px;top:224px;width:1px;height:340px;background:#000"></div>
<div class="box" style="left:27px;top:263px;width:716px;height:1px;background:#000"></div>
<div class="box" style="left:27px;top:283px;width:716px;height:1px;background:#000"></div>
<div class="box" style="left:27px;top:303px;width:716px;height:1px;background:#000"></div>
<div class="box" style="left:27px;top:323px;width:716px;height:1px;background:#000"></div>
<div class="box" style="left:27px;top:343px;width:716px;height:1px;background:#000"></div>
<div class="box" style="left:27px;top:363px;width:716px;height:1px;background:#000"></div>
<div class="box" style="left:27px;top:383px;width:716px;height:1px;background:#000"></div>
<div class="box" style="left:27px;top:403px;width:716px;height:1px;background:#000"></div>
<div class="box" style="left:27px;top:423px;width:716px;height:1px;background:#000"></div>
<div class="box" style="left:27px;top:443px;width:716px;height:1px;background:#000"></div>
<div class="box" style="left:27px;top:463px;width:716px;height:1px;background:#000"></div>
<div class="box" style="left:27px;top:483px;width:716px;height:1px;background:#000"></div>
<div class="box" style="left:27px;top:503px;width:716px;height:1px;background:#000"></div>
<div class="box" style="left:27px;top:523px;width:716px;height:1px;background:#000"></div>
<div class="box" style="left:27px;top:543px;width:716px;height:1px;background:#000"></div>
<div class="box" style="left:27px;top:563px;width:716px;height:1px;background:#000"></div>
<div class="cell" style="left:29px;top:225px;letter-spacing:0.4px">Торговая точка/</div>
<div class="cell" style="left:29px;top:245px;letter-spacing:0.25px">Дата</div>
<div class="cell" style="left:140px;top:225px;letter-spacing:0.46px">Продажи по Торговой</div>
<div class="cell" style="left:140px;top:245px;letter-spacing:0.25px">точке 1, тыс. руб.</div>
<div class="cell" style="left:293px;top:225px;letter-spacing:0.46px">Продажи по Торговой</div>
<div class="cell" style="left:293px;top:245px;letter-spacing:0.25px">точке 2, тыс. руб.</div>
<div class="cell" style="left:446px;top:225px;letter-spacing:0.46px">Продажи по Торговой</div>
<div class="cell" style="left:446px;top:245px;letter-spacing:0.25px">точке 3, тыс. руб.</div>
<div class="cell" style="left:595px;top:225px;letter-spacing:0.46px">Продажи по Торговой</div>
<div class="cell" style="left:595px;top:245px;letter-spacing:0.25px">точке 4, тыс. руб.</div>
<div class="rn" style="top:245px">1</div>
<div class="rn" style="top:265px;color:#0b7240;">2</div>
<div class="rn" style="top:285px;color:#0b7240;">3</div>
<div class="rn" style="top:305px;color:#0b7240;">4</div>
<div class="rn" style="top:325px;color:#0b7240;">5</div>
<div class="rn" style="top:345px;color:#0b7240;">6</div>
<div class="rn" style="top:365px;color:#0b7240;">7</div>
<div class="rn" style="top:385px;color:#0b7240;">8</div>
<div class="rn" style="top:405px;color:#0b7240;">9</div>
<div class="rn" style="top:425px;color:#0b7240;">10</div>
<div class="rn" style="top:445px;color:#0b7240;">11</div>
<div class="rn" style="top:465px;color:#0b7240;">12</div>
<div class="rn" style="top:485px;color:#0b7240;">13</div>
<div class="rn" style="top:505px;color:#0b7240;">14</div>
<div class="rn" style="top:525px;color:#0b7240;">15</div>
<div class="rn" style="top:545px;color:#0b7240;">16</div>
<div class="rn" style="top:565px;">17</div>
<div class="rn" style="top:585px;">18</div>
<div class="rn" style="top:605px;">19</div>
<div class="rn" style="top:625px;">20</div>
<div class="rn" style="top:645px;">21</div>
<div class="cell" style="left:27px;width:110px;top:265px;overflow:hidden"><span style="position:absolute;right:2.300px">01.06.2019</span></div>
<div class="cell" style="left:138px;width:150px;top:265px;text-align:right">25.223</div>
<div class="cell" style="left:291px;width:150px;top:265px;overflow:hidden"><span style="position:absolute;left:1.3px">33.224</span></div>
<div class="cell" style="left:446px;top:265px">14.557</div>
<div class="cell" style="left:595px;top:265px">24.334</div>
<div class="cell" style="left:27px;width:110px;top:285px;overflow:hidden"><span style="position:absolute;right:2.300px">02.06.2019</span></div>
<div class="cell" style="left:138px;width:150px;top:285px;text-align:right">25.475</div>
<div class="cell" style="left:291px;width:150px;top:285px;overflow:hidden"><span style="position:absolute;left:1.3px">33.722</span></div>
<div class="cell" style="left:446px;top:285px">14.673</div>
<div class="cell" style="left:595px;top:285px">24.456</div>
<div class="cell" style="left:27px;width:110px;top:305px;overflow:hidden"><span style="position:absolute;right:2.300px">03.06.2019</span></div>
<div class="cell" style="left:138px;width:150px;top:305px;text-align:right">25.73</div>
<div class="cell" style="left:291px;width:150px;top:305px;overflow:hidden"><span style="position:absolute;left:1.3px">34.228</span></div>
<div class="cell" style="left:446px;top:305px">14.791</div>
<div class="cell" style="left:595px;top:305px">24.578</div>
<div class="cell" style="left:27px;width:110px;top:325px;overflow:hidden"><span style="position:absolute;right:2.300px">04.06.2019</span></div>
<div class="cell" style="left:138px;width:150px;top:325px;text-align:right">25.987</div>
<div class="cell" style="left:291px;width:150px;top:325px;overflow:hidden"><span style="position:absolute;left:1.3px">34.742</span></div>
<div class="cell" style="left:446px;top:325px">14.909</div>
<div class="cell" style="left:595px;top:325px">24.701</div>
<div class="cell" style="left:27px;width:110px;top:345px;overflow:hidden"><span style="position:absolute;right:2.300px">05.06.2019</span></div>
<div class="cell" style="left:138px;width:150px;top:345px;text-align:right">26.247</div>
<div class="cell" style="left:291px;width:150px;top:345px;overflow:hidden"><span style="position:absolute;left:1.3px">35.263</span></div>
<div class="cell" style="left:446px;top:345px">15.028</div>
<div class="cell" style="left:595px;top:345px">24.824</div>
<div class="cell" style="left:27px;width:110px;top:365px;overflow:hidden"><span style="position:absolute;right:2.300px">06.06.2019</span></div>
<div class="cell" style="left:138px;width:150px;top:365px;text-align:right">26.51</div>
<div class="cell" style="left:291px;width:150px;top:365px;overflow:hidden"><span style="position:absolute;left:1.3px">35.792</span></div>
<div class="cell" style="left:446px;top:365px">15.149</div>
<div class="cell" style="left:595px;top:365px">24.948</div>
<div class="cell" style="left:27px;width:110px;top:385px;overflow:hidden"><span style="position:absolute;right:2.300px">07.06.2019</span></div>
<div class="cell" style="left:138px;width:150px;top:385px;text-align:right">26.775</div>
<div class="cell" style="left:291px;width:150px;top:385px;overflow:hidden"><span style="position:absolute;left:1.3px">36.329</span></div>
<div class="cell" style="left:446px;top:385px">15.27</div>
<div class="cell" style="left:595px;top:385px">25.073</div>
<div class="cell" style="left:27px;width:110px;top:405px;overflow:hidden"><span style="position:absolute;right:2.300px">08.06.2019</span></div>
<div class="cell" style="left:138px;width:150px;top:405px;text-align:right">27.042</div>
<div class="cell" style="left:291px;width:150px;top:405px;overflow:hidden"><span style="position:absolute;left:1.3px">36.873</span></div>
<div class="cell" style="left:446px;top:405px">15.392</div>
<div class="cell" style="left:595px;top:405px">25.199</div>
<div class="cell" style="left:27px;width:110px;top:425px;overflow:hidden"><span style="position:absolute;right:2.300px">09.06.2019</span></div>
<div class="cell" style="left:138px;width:150px;top:425px;text-align:right">27.313</div>
<div class="cell" style="left:291px;width:150px;top:425px;overflow:hidden"><span style="position:absolute;left:1.3px">37.427</span></div>
<div class="cell" style="left:446px;top:425px">15.515</div>
<div class="cell" style="left:595px;top:425px">25.325</div>
<div class="cell" style="left:27px;width:110px;top:445px;overflow:hidden"><span style="position:absolute;right:2.300px">10.06.2019</span></div>
<div class="cell" style="left:138px;width:150px;top:445px;text-align:right">27.586</div>
<div class="cell" style="left:291px;width:150px;top:445px;overflow:hidden"><span style="position:absolute;left:1.3px">37.988</span></div>
<div class="cell" style="left:446px;top:445px">15.639</div>
<div class="cell" style="left:595px;top:445px">25.451</div>
<div class="cell" style="left:27px;width:110px;top:465px;overflow:hidden"><span style="position:absolute;right:2.300px">11.06.2019</span></div>
<div class="cell" style="left:138px;width:150px;top:465px;text-align:right">27.862</div>
<div class="cell" style="left:291px;width:150px;top:465px;overflow:hidden"><span style="position:absolute;left:1.3px">38.558</span></div>
<div class="cell" style="left:446px;top:465px">15.764</div>
<div class="cell" style="left:595px;top:465px">25.578</div>
<div class="cell" style="left:27px;width:110px;top:485px;overflow:hidden"><span style="position:absolute;right:2.300px">12.06.2019</span></div>
<div class="cell" style="left:138px;width:150px;top:485px;text-align:right">28.141</div>
<div class="cell" style="left:291px;width:150px;top:485px;overflow:hidden"><span style="position:absolute;left:1.3px">39.136</span></div>
<div class="cell" style="left:446px;top:485px">15.891</div>
<div class="cell" style="left:595px;top:485px">25.706</div>
<div class="cell" style="left:27px;width:110px;top:505px;overflow:hidden"><span style="position:absolute;right:2.300px">13.06.2019</span></div>
<div class="cell" style="left:138px;width:150px;top:505px;text-align:right">28.422</div>
<div class="cell" style="left:291px;width:150px;top:505px;overflow:hidden"><span style="position:absolute;left:1.3px">39.723</span></div>
<div class="cell" style="left:446px;top:505px">16.018</div>
<div class="cell" style="left:595px;top:505px">25.835</div>
<div class="cell" style="left:27px;width:110px;top:525px;overflow:hidden"><span style="position:absolute;right:2.300px">14.06.2019</span></div>
<div class="cell" style="left:138px;width:150px;top:525px;text-align:right">28.706</div>
<div class="cell" style="left:291px;width:150px;top:525px;overflow:hidden"><span style="position:absolute;left:1.3px">40.319</span></div>
<div class="cell" style="left:446px;top:525px">16.146</div>
<div class="cell" style="left:595px;top:525px">25.964</div>
<div class="cell" style="left:27px;width:110px;top:545px;overflow:hidden"><span style="position:absolute;right:2.300px">15.06.2019</span></div>
<div class="cell" style="left:138px;width:150px;top:545px;text-align:right">28.993</div>
<div class="cell" style="left:291px;width:150px;top:545px;overflow:hidden"><span style="position:absolute;left:1.3px">40.924</span></div>
<div class="cell" style="left:446px;top:545px">16.275</div>
<div class="cell" style="left:595px;top:545px">26.094</div>
<div class="box" style="left:136px;top:262px;width:156px;height:303px;border:2px solid #0b7240"></div>
<div class="box" style="left:138px;top:562px;width:152px;height:1px;background:#fff"></div>
<div class="box" style="left:289px;top:284px;width:1px;height:279px;background:#fff"></div>
<div class="box" style="left:287px;top:560px;width:7px;height:7px;background:#0b7240;border:1px solid #fff"></div>
<div class="box" style="left:131px;top:258px;width:165px;height:314px;border:3px solid #fe0000;border-radius:8px"></div>
<div class="box" style="left:294px;top:567px;width:61px;height:23px;background:#fcfcfc;border:1px solid #ababab"></div>
<svg class="i" style="left:297px;top:569px" width="17" height="18" viewBox="0 0 17 18"><rect x="1" y="3" width="12.500" height="13" rx="1" fill="#f0a04b"/><path d="M5 3.500h4.500M7.200 1.200v2" stroke="#666" stroke-width="1.600" fill="none"/><rect x="4.300" y="2.800" width="6" height="2" fill="#666"/><circle cx="3.300" cy="9" r="0.800" fill="#fff"/><circle cx="3.300" cy="12.500" r="0.800" fill="#fff"/><path d="M8.500 8.500h4.500l3 3v5h-7.500z" fill="#fff" stroke="#666" stroke-width="1.200"/><path d="M13 8.500v3h3" fill="none" stroke="#666" stroke-width="1"/></svg>
<div id="f32" class="t" style="left:317.3px;top:570px;font-size:12px;color:#444;letter-spacing:-0.392px;">(Ctrl)</div>
<div class="box" style="left:346px;top:577px;width:0;height:0;border-left:2.500px solid transparent;border-right:2.500px solid transparent;border-top:3px solid #444"></div>
<div class="box" style="left:294px;top:593px;width:24px;height:24px;background:#fff;border:1px solid #0b7240"></div>
<svg class="i" style="left:297px;top:596px" width="17" height="17" viewBox="0 0 17 17"><path d="M2.500 12v3.500h13.500v-13.500h-8" fill="none" stroke="#666" stroke-width="1.200"/><rect x="7.500" y="2" width="8.500" height="2" fill="#666"/><path d="M6.500 0.500L2.500 6.500h2.500L1 12.500L4.500 7.500h2.500z" fill="#f0a04b" stroke="#f0a04b" stroke-width="0.800"/><rect x="6" y="5.800" width="4.500" height="1.300" fill="#f0a04b"/><rect x="6" y="8.800" width="8" height="1.800" fill="#1a7fd0"/><rect x="6" y="12" width="6" height="1.600" fill="#55b0a8"/></svg>
<div class="box" style="left:1009px;top:206px;width:15px;height:15px;background:#fff;border:1px solid #ababab"></div>
<div class="box" style="left:1013px;top:211px;width:7px;height:4px;background:#707070;clip-path:polygon(0 100%,100% 100%,50% 0)"></div>
<div class="box" style="left:1009px;top:221px;width:15px;height:410px;background:#fff;border:1px solid #ababab"></div>
<div class="box" style="left:1009px;top:631px;width:15px;height:21px;background:#dcdcdc"></div>
<div class="box" style="left:1009px;top:652px;width:15px;height:15px;background:#fff;border:1px solid #ababab"></div>
<div class="box" style="left:1013px;top:658px;width:7px;height:4px;background:#707070;clip-path:polygon(0 0,100% 0,50% 100%)"></div>
<div class="box" style="left:634px;top:673px;width:15px;height:15px;background:#fff;border:1px solid #ababab"></div>
<div class="box" style="left:638.500px;top:677px;width:4.500px;height:7px;background:#707070;clip-path:polygon(100% 0,100% 100%,0 50%)"></div>
<div class="box" style="left:648px;top:673px;width:304px;height:15px;background:#fff;border:1px solid #ababab"></div>
<div class="box" style="left:952px;top:673px;width:40px;height:15px;background:#dcdcdc"></div>
<div class="box" style="left:991px;top:673px;width:15px;height:15px;background:#fff;border:1px solid #ababab"></div>
<div class="box" style="left:996.500px;top:677px;width:4.500px;height:7px;background:#707070;clip-path:polygon(0 0,0 100%,100% 50%)"></div>
<div class="box" style="left:615.700px;top:676px;width:1.600px;height:1.800px;background:#a0a0a0"></div>
<div class="box" style="left:615.700px;top:680px;width:1.600px;height:1.800px;background:#a0a0a0"></div>
<div class="box" style="left:615.700px;top:684px;width:1.600px;height:1.800px;background:#a0a0a0"></div>
<div class="box" style="left:101px;top:666px;width:107px;height:23px;background:#fff;border-left:1px solid #ababab;border-right:1px solid #ababab"></div>
<div class="box" style="left:101px;top:689px;width:107px;height:2px;background:#0b7240"></div>
<div id="f33" class="t" style="left:113.5px;top:672px;font-size:13px;color:#0b7240;letter-spacing:-0.18px;font-weight:bold;">microexcel.ru</div>
<div class="box" style="left:28px;top:676px;width:0;height:0;border-top:4px solid transparent;border-bottom:4px solid transparent;border-right:4px solid #c3c3c3"></div>
<div class="box" style="left:57px;top:676px;width:0;height:0;border-top:4px solid transparent;border-bottom:4px solid transparent;border-left:4px solid #c3c3c3"></div>
<svg class="i" style="left:240px;top:671px" width="18" height="18" viewBox="0 0 18 18"><circle cx="9" cy="9" r="7.500" fill="none" stroke="#666" stroke-width="1"/><path d="M9 5v8M5 9h8" stroke="#555" stroke-width="1.500"/></svg>
<div class="box" style="left:1px;top:693px;width:1026px;height:1px;background:#d4d4d4"></div>
<div class="box" style="left:1px;top:694px;width:1026px;height:22px;background:#f3f3f3"></div>
<div class="box" style="left:1px;top:715px;width:1026px;height:1px;background:#fbf8fa"></div>
<div class="box" style="left:1px;top:157px;width:1px;height:67px;background:#f4eff2"></div>
<div class="box" style="left:1px;top:667px;width:1px;height:49px;background:#f4eff2"></div>
<div class="box" style="left:1026px;top:157px;width:1px;height:559px;background:#f4eff2"></div>
<svg class="i" style="left:8px;top:697px" width="15" height="15" viewBox="0 0 15 15"><path d="M2.500 7v6.300h11v-11h-5.500" fill="none" stroke="#6a6a6a" stroke-width="1.100"/><rect x="8" y="2" width="5.800" height="2.500" fill="#6a6a6a"/><circle cx="3.900" cy="4" r="3" fill="#6a6a6a"/><path d="M7 7.500h2M10 7.500h2M4 9.500h2M7 9.500h2M10 9.500h2M4 11.500h2M7 11.500h2M10 11.500h2" stroke="#6a6a6a" stroke-width="0.900"/></svg>
<div id="f34" class="t" style="left:403.8px;top:697px;font-size:11.5px;color:#333;letter-spacing:-0.397px;">Среднее: 27.06746667</div>
<div id="f35" class="t" style="left:534.5px;top:697px;font-size:12px;color:#333;letter-spacing:-0.383px;">Количество: 15</div>
<div id="f36" class="t" style="left:629.7px;top:697px;font-size:11px;color:#333;letter-spacing:-0.203px;">Сумма: 406.012</div>
<div class="box" style="left:727px;top:694px;width:38px;height:21px;background:#c6c6c6"></div>
<svg class="i" style="left:739px;top:698px" width="13" height="13" viewBox="0 0 13 13"><path d="M0.500 0.500h12v12h-12zM0.500 4.500h12M0.500 8.500h12M4.500 0.500v12M8.500 0.500v12" fill="none" stroke="#666"/></svg>
<svg class="i" style="left:777px;top:698px" width="14" height="13" viewBox="0 0 14 13"><path d="M0.500 0.500h13v12h-13z" fill="none" stroke="#666"/><path d="M3.500 3.500h7v6h-7zM5 5.500h4M5 7.500h4" fill="none" stroke="#666"/></svg>
<svg class="i" style="left:815px;top:698px" width="14" height="13" viewBox="0 0 14 13"><path d="M0.500 0.500h13v12h-13z" fill="none" stroke="#666"/><path d="M4.500 0.500v6h5v-6" fill="none" stroke="#666"/></svg>
<div class="box" style="left:846px;top:704px;width:7px;height:2px;background:#555"></div>
<div class="box" style="left:856px;top:705px;width:100px;height:1px;background:#a0a0a0"></div>
<div class="box" style="left:904px;top:699px;width:5px;height:11px;background:#666"></div>
<div class="box" style="left:960px;top:704px;width:7px;height:2px;background:#555"></div>
<div class="box" style="left:962.500px;top:701.500px;width:2px;height:7px;background:#555"></div>
<div id="f37" class="t" style="left:979.2px;top:696px;font-size:11px;color:#333;letter-spacing:-0.556px;">100 %</div>
</body></html>
